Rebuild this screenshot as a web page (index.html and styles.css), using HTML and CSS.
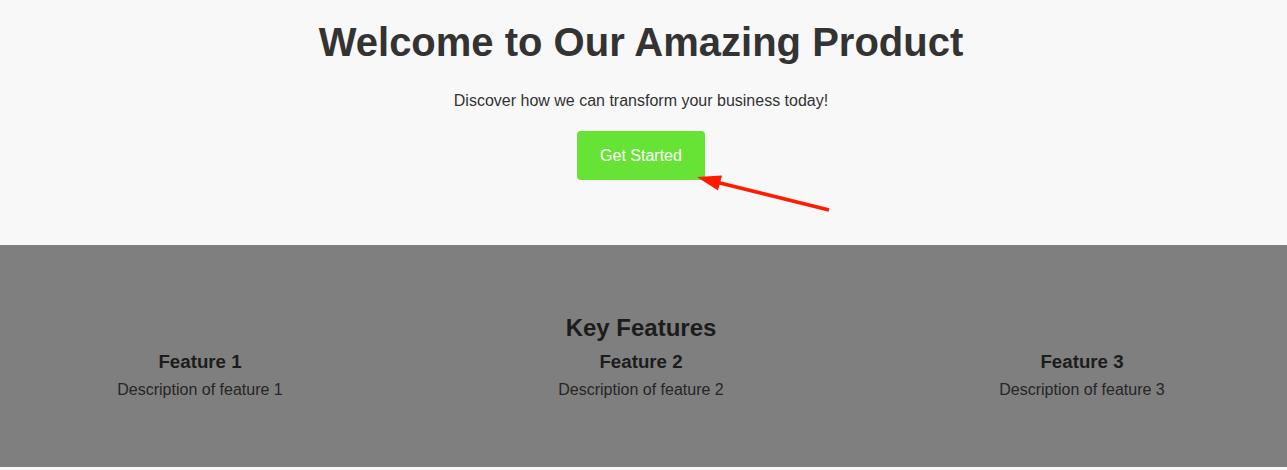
FILE: index.html
```html
<!DOCTYPE html>
<html lang="en">
<head>
<meta charset="utf-8">
<title>Welcome</title>
<link rel="stylesheet" href="styles.css">
</head>
<body>
<section class="hero">
  <h1 class="hero-title">Welcome to Our Amazing Product</h1>
  <p class="hero-text">Discover how we can transform your business today!</p>
  <a class="cta" href="#">Get Started</a>
</section>
<section class="features">
  <h2 class="features-title">Key Features</h2>
  <div class="feature-grid">
    <div class="feature">
      <h3 class="feature-name">Feature 1</h3>
      <p class="feature-desc">Description of feature 1</p>
    </div>
    <div class="feature">
      <h3 class="feature-name">Feature 2</h3>
      <p class="feature-desc">Description of feature 2</p>
    </div>
    <div class="feature">
      <h3 class="feature-name">Feature 3</h3>
      <p class="feature-desc">Description of feature 3</p>
    </div>
  </div>
</section>
<svg class="annotation" width="1287" height="470" viewBox="0 0 1287 470">
  <line x1="829" y1="210" x2="712" y2="181" stroke="#ff1a00" stroke-width="3.5" stroke-linecap="butt"/>
  <polygon points="697,177 718,190.5 722,175.5" fill="#ff1a00"/>
</svg>
</body>
</html>
```
FILE: styles.css
```css
html, body {
  margin: 0;
  padding: 0;
}
body {
  background: #f8f8f8;
  font-family: "Liberation Sans", Arial, sans-serif;
  color: #333;
  width: 1287px;
  height: 470px;
  overflow: hidden;
  position: relative;
}
.hero {
  height: 245px;
  box-sizing: border-box;
  padding: 19px 5px 0 0;
  display: flex;
  flex-direction: column;
  align-items: center;
}
.hero-title {
  margin: 0;
  font-size: 40px;
  line-height: 46px;
  font-weight: bold;
  color: #333;
}
.hero-text {
  margin: 26px 0 0;
  font-size: 16px;
  line-height: 20px;
  color: #333;
}
.cta {
  margin-top: 20px;
  display: inline-block;
  background: #66e334;
  color: #fff;
  text-decoration: none;
  font-size: 16px;
  line-height: 19px;
  padding: 15px 23px;
  border-radius: 4px;
}
.features {
  height: 222px;
  background: #7f7f7f;
  box-sizing: border-box;
  padding: 69px 5px 0 0;
  display: flex;
  flex-direction: column;
  align-items: center;
  color: #1c1c1c;
}
.features-title {
  margin: 0;
  font-size: 24px;
  line-height: 28px;
  font-weight: bold;
}
.feature-grid {
  margin-top: 9px;
  display: grid;
  grid-template-columns: repeat(3, 400px);
  column-gap: 41px;
}
.feature {
  text-align: center;
}
.feature-name {
  margin: 0;
  font-size: 18.7px;
  line-height: 22px;
  font-weight: bold;
}
.feature-desc {
  margin: 7px 0 0;
  font-size: 16px;
  line-height: 19px;
  color: #262626;
}
.annotation {
  position: absolute;
  left: 0;
  top: 0;
  pointer-events: none;
}
```
